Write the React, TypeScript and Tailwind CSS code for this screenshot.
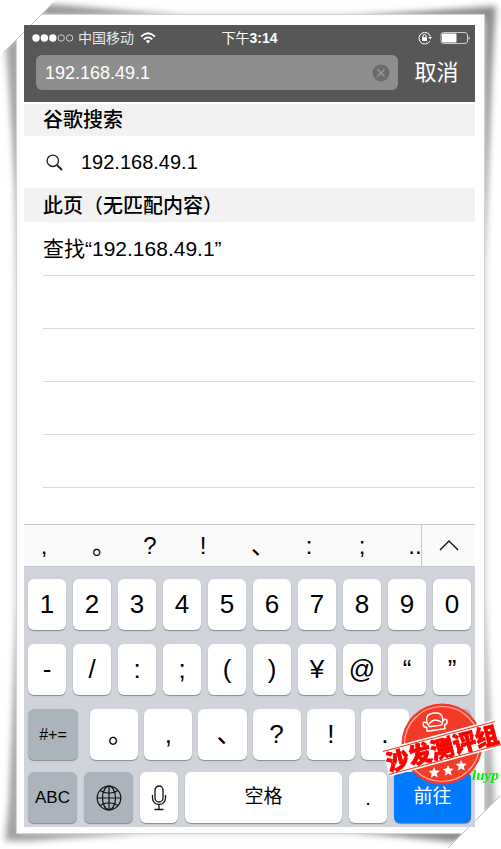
import type { ReactNode } from 'react';

const digits = ['1', '2', '3', '4', '5', '6', '7', '8', '9', '0'];
const symbols = ['-', '/', ':', ';', '(', ')', '¥', '@', '“', '”'];
const marks = ['。', ',', '、', '?', '!', '.'];
const candidates = [',', '。', '?', '!', '、', ':', ';', '..'];

const keyBase =
  'flex h-[51px] min-w-0 items-center justify-center rounded-md shadow-[0_1px_1px_#858b93] text-black';

function Key({ children, className = 'flex-1 bg-white text-[26px]', label }: { children?: ReactNode; className?: string; label?: string }) {
  return (
    <button type="button" aria-label={label} className={`${keyBase} ${className}`}>
      {children}
    </button>
  );
}

// Full-width marks sit in the left half of their em box, so pad them back to the middle
function Mark({ char }: { char: string }) {
  const fullWidth = char === '。' || char === '、';
  return <span className={fullWidth ? 'pl-3.5' : ''}>{char}</span>;
}

function PaperFrame() {
  return (
    <svg
      className="absolute inset-0 w-full h-full"
      viewBox="0 0 501 849"
      preserveAspectRatio="none"
      aria-hidden="true"
    >
      <defs>
        <filter id="soft" x="-20%" y="-20%" width="140%" height="140%">
          <feGaussianBlur stdDeviation="3" />
        </filter>
        <filter id="thin" x="-20%" y="-20%" width="140%" height="140%">
          <feGaussianBlur stdDeviation="3" />
        </filter>
      </defs>
      <rect width="501" height="849" fill="#fff" />
      <g filter="url(#soft)" fill="#8c8c8c">
        <path d="M6 48 L20 30 V300 L17 200Z" opacity="0.8" />
        <path d="M46 4 L62 5 L180 16 H40Z" opacity="0.9" />
        <path d="M350 17 L496 6 L492 70 L484 260 V20Z" />
        <path d="M18 600 L9 800 L5 841 L30 841 L150 832 H20Z" opacity="0.8" />
        <path d="M350 831 L462 843 L480 828Z" />
        <path d="M484 600 L495 810 L484 826Z" opacity="0.7" />
      </g>
      <rect x="15" y="14" width="471" height="820" fill="#aaa" opacity="0.55" filter="url(#thin)" />
      <rect x="16" y="14" width="469" height="820" fill="#d2d2d2" />
      <rect x="17" y="15" width="467" height="818" fill="#fff" />
      <path d="M0 0 H56 L0 56Z M501 849 H446 L501 795Z" fill="#fff" />
      <path d="M3 53 L53 3 M448 848 L500 796" stroke="#c4c4c4" strokeWidth="1" />
    </svg>
  );
}

function StatusBar() {
  return (
    <div className="grid grid-cols-3 items-center h-[25px] px-2 text-sm text-white">
      <div className="flex items-center">
        <svg width="42" height="10" viewBox="0 0 42 10" fill="#fff" aria-hidden="true">
          <circle cx="4" cy="5" r="3.7" />
          <circle cx="12.4" cy="5" r="3.7" />
          <circle cx="20.8" cy="5" r="3.7" />
          <circle cx="29.2" cy="5" r="3.2" fill="none" stroke="#ddd" strokeWidth="0.9" />
          <circle cx="37.6" cy="5" r="3.2" fill="none" stroke="#ddd" strokeWidth="0.9" />
        </svg>
        <span className="ml-1 whitespace-nowrap text-gray-200">中国移动</span>
        <svg className="ml-1.5 shrink-0" width="16" height="12" viewBox="0 0 16 12" fill="none" stroke="#fff" strokeWidth="1.8" aria-hidden="true">
          <path d="M1 4.6 Q8 -2 15 4.6" />
          <path d="M3.7 7.4 Q8 3.4 12.3 7.4" />
          <path d="M5.8 9 Q8 7.2 10.2 9 L8 11.6Z" fill="#fff" stroke="none" />
        </svg>
      </div>
      <div className="text-center whitespace-nowrap">
        下午<span className="font-bold">3:14</span>
      </div>
      <div className="flex items-center justify-end gap-2">
        <svg width="14" height="14" viewBox="0 0 14 14" fill="none" stroke="#fff" aria-hidden="true">
          <path d="M11.8 10.2 A5.8 5.8 0 1 1 12.4 5.6" />
          <path d="M10.2 6 H14 L12.2 8.6Z" fill="#fff" stroke="none" />
          <rect x="4" y="6.2" width="5" height="3.8" fill="#fff" stroke="none" />
          <path d="M5 6.4 V5 A1.5 1.5 0 0 1 8 5 V6.4" />
        </svg>
        <svg className="-mr-1" width="31" height="14" viewBox="0 0 31 14" fill="none" aria-hidden="true">
          <rect x="1" y="1.5" width="26.5" height="11" rx="2.5" stroke="#ccc" />
          <rect x="2" y="2.5" width="14.5" height="9" rx="1" fill="#fff" />
          <path d="M28.5 5 Q31 7 28.5 9Z" fill="#ddd" />
        </svg>
      </div>
    </div>
  );
}

function Stamp() {
  return (
    <svg
      className="absolute -right-7 bottom-8 pointer-events-none"
      width="122"
      height="94"
      viewBox="381 701 122 94"
      role="img"
      aria-label="沙发测评组 luyp"
    >
      <circle cx="442" cy="744" r="40.5" fill="#f43b28" />
      <circle cx="442" cy="744" r="37.5" fill="none" stroke="#ffb3a8" strokeWidth="1.2" />
      <g fill="none" stroke="#fff" strokeWidth="1.5" strokeLinejoin="round" transform="rotate(-8 435 722)">
        <path d="M427 722 V719 Q427 713 435 713 Q443 713 443 719 V722" />
        <path d="M429 723 Q435 717 441 723" />
        <path d="M427 722 Q423 719 423 723 Q423 726 426 726 V730 H444 V726 Q447 726 447 723 Q447 719 443 722 L441 726 H429Z" />
      </g>
      <g transform="rotate(-15 442 748)">
        <rect x="384" y="734" width="116" height="28" fill="#fff" />
        <path d="M384 736 H500 M384 760 H500" stroke="#f43b28" strokeWidth="1" />
        <text
          x="442"
          y="757"
          textAnchor="middle"
          className="font-black text-[23px]"
          fill="#f00"
          stroke="#f00"
          strokeWidth="0.8"
        >
          沙发测评组
        </text>
      </g>
      <g fill="#fff">
        <path id="star" d="M434 767 l1.7 3.6 4 .2 -3 2.7 1.1 4 -3.5 -2.1 -3.5 2.4 .9 -4.2 -3.2 -2.5 4.2 -.5Z" />
        <use href="#star" x="14" y="-2" />
        <use href="#star" x="27" y="-7" />
      </g>
      <text x="472" y="780" className="font-['Liberation_Serif',serif] italic font-bold text-[15px]" fill="#00f000">
        luyp
      </text>
    </svg>
  );
}

function Keyboard() {
  return (
    <section className="relative bg-[#d0d4da] px-1 pt-3 pb-1">
      <div className="flex flex-col gap-3.5">
        <div className="flex gap-[7px]">
          {digits.map((d) => (
            <Key key={d}>{d}</Key>
          ))}
        </div>
        <div className="flex gap-[7px]">
          {symbols.map((s) => (
            <Key key={s}>{s}</Key>
          ))}
        </div>
        <div className="flex gap-3">
          <Key className="w-[50px] bg-[#abb3bd] text-base">#+=</Key>
          <div className="flex flex-1 gap-1.5">
            {marks.map((m) => (
              <Key key={m}>
                <Mark char={m} />
              </Key>
            ))}
          </div>
          <Key label="删除" className="w-[50px] bg-[#abb3bd]" />
        </div>
      </div>
      <div className="mt-3 flex gap-[7px]">
        <Key className="w-[49px] bg-[#abb3bd] text-[17px]">ABC</Key>
        <Key label="切换键盘" className="w-[49px] bg-[#abb3bd]">
          <svg width="26" height="26" viewBox="0 0 26 26" fill="none" stroke="#111" strokeWidth="1.2" aria-hidden="true">
            <circle cx="13" cy="13" r="11.8" />
            <ellipse cx="13" cy="13" rx="6.5" ry="11.8" />
            <path d="M13 1 V25 M1 13 H25 M4 5.5 Q13 11 22 5.5 M4 20.5 Q13 15 22 20.5" />
          </svg>
        </Key>
        <Key label="听写" className="w-[38px] bg-white">
          <svg width="16" height="26" viewBox="0 0 16 26" fill="none" stroke="#111" strokeWidth="1.3" aria-hidden="true">
            <rect x="4" y="1" width="8" height="16" rx="4" />
            <path d="M1.5 10 V13 A6.5 6.5 0 0 0 14.5 13 V10 M8 19.5 V24.5 M3.5 24.5 H12.5" />
          </svg>
        </Key>
        <Key className="flex-1 bg-white text-[19px]">空格</Key>
        <Key className="w-[38px] bg-white text-xl">.</Key>
        <Key className="w-[77px] bg-[#007aff] text-[19px] text-white">前往</Key>
      </div>
      <Stamp />
    </section>
  );
}

export default function App() {
  return (
    <div className="relative overflow-hidden bg-white pt-[25px] pr-[26px] pb-[22px] pl-6 font-['Liberation_Sans','Noto_Sans_CJK_SC',sans-serif]">
      <PaperFrame />

      <main className="relative bg-white text-black">
        <header className="bg-[#575757] pb-3">
          <StatusBar />
          <form className="flex items-center mt-[5px] pl-3" onSubmit={(e) => e.preventDefault()}>
            <div className="flex flex-1 min-w-0 items-center h-[35px] rounded-md bg-[#8e8e8e] pl-[9px] pr-2">
              <input
                type="text"
                aria-label="搜索或输入网址"
                defaultValue="192.168.49.1"
                className="flex-1 min-w-0 bg-transparent text-lg text-white outline-none"
              />
              <button type="button" aria-label="清除">
                <svg width="18" height="18" viewBox="0 0 18 18" aria-hidden="true">
                  <circle cx="9" cy="9" r="8.5" fill="#6b6b6b" />
                  <path d="M5.5 5.5 L12.5 12.5 M12.5 5.5 L5.5 12.5" stroke="#979797" strokeWidth="1.5" />
                </svg>
              </button>
            </div>
            <button type="button" className="w-[77px] text-[22px] leading-7 text-white">
              取消
            </button>
          </form>
        </header>

        <h2 className="h-[34px] border-t-2 border-white bg-[#f3f2f3] pl-[19px] text-xl leading-8 font-medium">谷歌搜索</h2>
        <a href="#search" className="flex items-center h-[52px] pl-[22px] text-xl">
          <svg width="17" height="17" viewBox="0 0 17 17" fill="none" stroke="#222" aria-hidden="true">
            <circle cx="6.8" cy="6.8" r="5.7" strokeWidth="1.4" />
            <path d="M11 11 L16 16" strokeWidth="2" />
          </svg>
          <span className="ml-[18px]">192.168.49.1</span>
        </a>
        <h2 className="h-[34px] bg-[#f3f2f3] pl-[19px] text-xl leading-9 font-medium">此页（无匹配内容）</h2>
        <div className="pl-[19px]">
          <a href="#find" className="block h-[53px] text-[21px] leading-[53px]">
            查找“192.168.49.1”
          </a>
          {[0, 1, 2, 3].map((row) => (
            <div key={row} className="h-[53px] border-t border-[#d9d9dc]" />
          ))}
          <div className="h-[37px] border-t border-[#d9d9dc]" />
        </div>

        <div className="flex h-[43px] border-t border-b border-[#c5cad1] bg-[#fafafb]">
          <div className="flex flex-1 gap-[13px] overflow-hidden">
            {candidates.map((c) => (
              <button key={c} type="button" className="flex w-10 shrink-0 justify-center items-center text-2xl">
                <Mark char={c} />
              </button>
            ))}
          </div>
          <button type="button" aria-label="展开" className="flex w-[54px] items-center justify-center border-l border-[#c5cad1]">
            <svg width="20" height="11" viewBox="0 0 20 11" fill="none" stroke="#111" strokeWidth="1.4" aria-hidden="true">
              <path d="M1 10 L10 1 L19 10" />
            </svg>
          </button>
        </div>

        <Keyboard />
      </main>
    </div>
  );
}
